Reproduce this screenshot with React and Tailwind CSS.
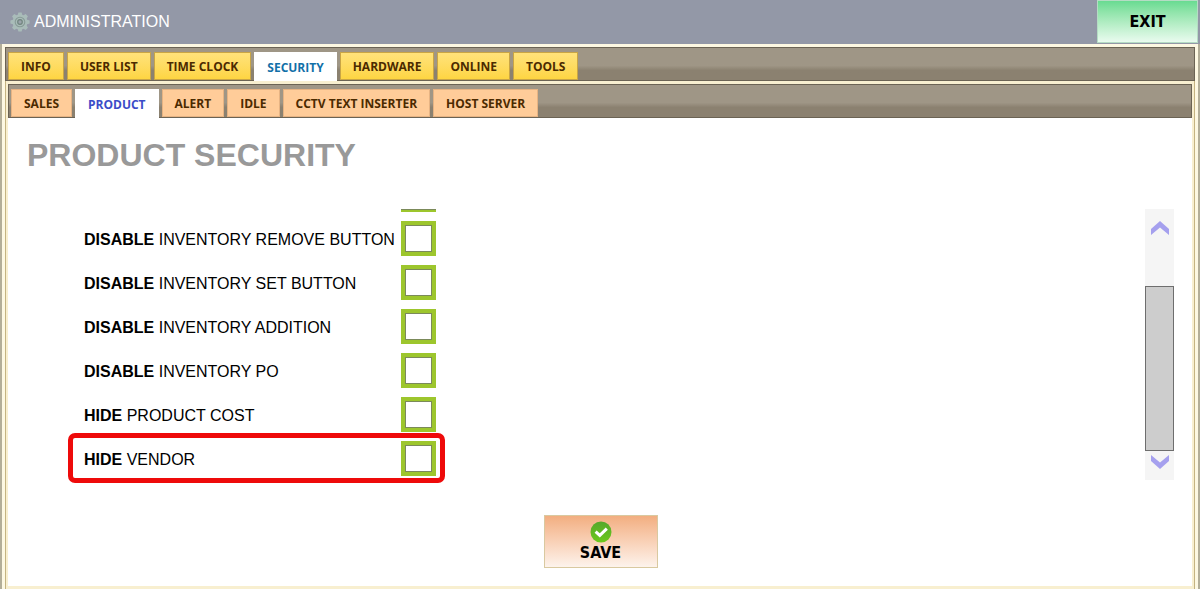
import { useState } from "react";

const MAIN_TABS = ["INFO", "USER LIST", "TIME CLOCK", "SECURITY", "HARDWARE", "ONLINE", "TOOLS"];
const SUB_TABS = ["SALES", "PRODUCT", "ALERT", "IDLE", "CCTV TEXT INSERTER", "HOST SERVER"];

const OPTIONS = [
  { id: "remove", verb: "DISABLE", label: "INVENTORY REMOVE BUTTON" },
  { id: "set", verb: "DISABLE", label: "INVENTORY SET BUTTON" },
  { id: "addition", verb: "DISABLE", label: "INVENTORY ADDITION" },
  { id: "po", verb: "DISABLE", label: "INVENTORY PO" },
  { id: "cost", verb: "HIDE", label: "PRODUCT COST" },
  { id: "vendor", verb: "HIDE", label: "VENDOR", highlight: true },
];

const GearIcon = () => (
  <svg viewBox="0 0 20 20" className="w-5 h-5">
    <g fill="#a9bcb9">
      {[0, 45, 90, 135, 180, 225, 270, 315].map((a) => (
        <path key={a} d="M7.2 4.5 L8.4 0.4 H11.6 L12.8 4.5 Z" transform={`rotate(${a} 10 10)`} />
      ))}
      <circle cx="10" cy="10" r="7.4" />
    </g>
    <circle cx="10" cy="10" r="4.8" fill="none" stroke="#879b96" strokeWidth="1.1" />
    <circle cx="10" cy="10" r="2.3" fill="#9ba5ab" stroke="#71857f" strokeWidth="1.2" />
  </svg>
);

const CheckIcon = () => (
  <svg viewBox="0 0 22 22" className="w-[22px] h-[22px]">
    <defs>
      <linearGradient id="check" x1="0" y1="0" x2="0" y2="1">
        <stop offset="0" stopColor="#55a82c" />
        <stop offset="1" stopColor="#6cc81c" />
      </linearGradient>
    </defs>
    <circle cx="11" cy="11" r="10.5" fill="url(#check)" />
    <path d="M5.6 10.6 L9.8 14.4 L16.8 7.6" fill="none" stroke="#fff" strokeWidth="3" />
  </svg>
);

const Arrow = ({ down }) => (
  <svg viewBox="0 0 18 14" className="w-[18px] h-[14px]">
    <path
      d={down ? "M0 0 L9 7.5 L18 0 V6 L9 14 L0 6 Z" : "M0 14 L9 6.5 L18 14 V8 L9 0 L0 8 Z"}
      fill="#a5a0ee"
    />
  </svg>
);

const TabBar = ({ tabs, active, onChange, tabClass, activeClass }) => (
  <nav className="flex gap-[3px] h-[34px] pt-1 pl-[2px] border border-[#6b6354] bg-linear-to-b from-[#9f9686] from-55% to-[#8b8170] to-70%">
    {tabs.map((t) => (
      <button
        key={t}
        onClick={() => onChange(t)}
        className={`px-3 pt-[2px] border text-xs font-bold whitespace-nowrap ${t === active ? activeClass : tabClass}`}
      >
        {t}
      </button>
    ))}
  </nav>
);

const App = () => {
  const [mainTab, setMainTab] = useState("SECURITY");
  const [subTab, setSubTab] = useState("PRODUCT");
  const [checked, setChecked] = useState({});

  const toggle = (id) => setChecked((prev) => ({ ...prev, [id]: !prev[id] }));

  return (
    <div className="min-h-screen flex flex-col bg-white font-['Liberation_Sans',sans-serif] text-black">
      {/* Header */}
      <header className="flex items-start justify-between h-11 bg-[#9398a7]">
        <div className="flex items-center gap-1 h-11 pl-[10px]">
          <GearIcon />
          <h1 className="text-base text-white">ADMINISTRATION</h1>
        </div>
        <button className="w-[101px] h-[43px] mr-[2px] border border-[#b5dcc4] bg-linear-to-b from-[#68db91] to-[#e9fbef] font-['DejaVu_Sans_Condensed','DejaVu_Sans',sans-serif] font-bold text-base">
          EXIT
        </button>
      </header>

      {/* Outer frame */}
      <div className="grow flex flex-col border-x-2 border-[#b3ae98]">
        <div className="grow flex flex-col pt-[3px] px-[3px] bg-[#fdf8e2] font-['Open_Sans',sans-serif]">
          <TabBar
            tabs={MAIN_TABS}
            active={mainTab}
            onChange={setMainTab}
            tabClass="border-[#c9a545] bg-linear-to-b from-[#ffe27a] to-[#fed541] text-[#4b2a00]"
            activeClass="border-white bg-white -mb-px text-[#1270a8]"
          />
          <div className="grow flex flex-col pt-[3px] px-[2px] pb-[3px] border-x border-[#c4b381] bg-[#f8efd0]">
            <TabBar
              tabs={SUB_TABS}
              active={subTab}
              onChange={setSubTab}
              tabClass="border-[#e6b383] bg-[#ffcc99] text-[#4b2a00]"
              activeClass="border-white bg-white -mb-px text-[#3b4cc8]"
            />
            <main className="grow flex flex-col pl-[19px] pr-[18px] pt-4 pb-[18px] bg-white font-['Liberation_Sans',sans-serif]">
              <h2 className="text-[32px] leading-[42px] font-bold text-[#999999]">PRODUCT SECURITY</h2>

              {/* Option list with its scroll bar */}
              <div className="flex justify-between mt-[33px] h-[271px]">
                <div className="ml-[44px]">
                  <div className="ml-[330px] w-[35px] h-[3px] mb-[4px] bg-[#9dc62d] border-t border-[#7b8a5a]" />
                  {OPTIONS.map((o) => (
                    <div
                      key={o.id}
                      className={`flex items-center justify-between w-[371px] h-11 pl-[13px] pr-[6px] ${
                        o.highlight ? "outline-5 -outline-offset-2 outline-[#ee0a0a] rounded-sm" : ""
                      }`}
                    >
                      <label htmlFor={o.id} className="pt-[3px] text-base whitespace-nowrap">
                        <b>{o.verb}</b> {o.label}
                      </label>
                      <input
                        id={o.id}
                        type="checkbox"
                        checked={!!checked[o.id]}
                        onChange={() => toggle(o.id)}
                        className="shrink-0 appearance-none w-[35px] h-[35px] border-4 border-[#9dc62d] bg-white inset-ring inset-ring-[#7b8a5a] checked:bg-[#9dc62d]"
                      />
                    </div>
                  ))}
                </div>
                <div className="flex flex-col items-center w-[29px] bg-[#f5f5f5]">
                  <button aria-label="Scroll up" className="pt-3">
                    <Arrow />
                  </button>
                  <div className="grow" />
                  <div className="w-full h-[165px] border border-[#6e6e6e] bg-[#cdcdcd]" />
                  <button aria-label="Scroll down" className="pt-1 pb-[11px]">
                    <Arrow down />
                  </button>
                </div>
              </div>

              <button className="self-center flex flex-col items-center w-[114px] h-[53px] mt-[35px] pt-[5px] border border-[#d9c9a0] bg-linear-to-b from-[#f2ae80] to-[#fdf3ec] font-['DejaVu_Sans_Condensed','DejaVu_Sans',sans-serif] font-bold text-base leading-5">
                <CheckIcon />
                SAVE
              </button>
            </main>
          </div>
        </div>
      </div>
    </div>
  );
};

export default App;
